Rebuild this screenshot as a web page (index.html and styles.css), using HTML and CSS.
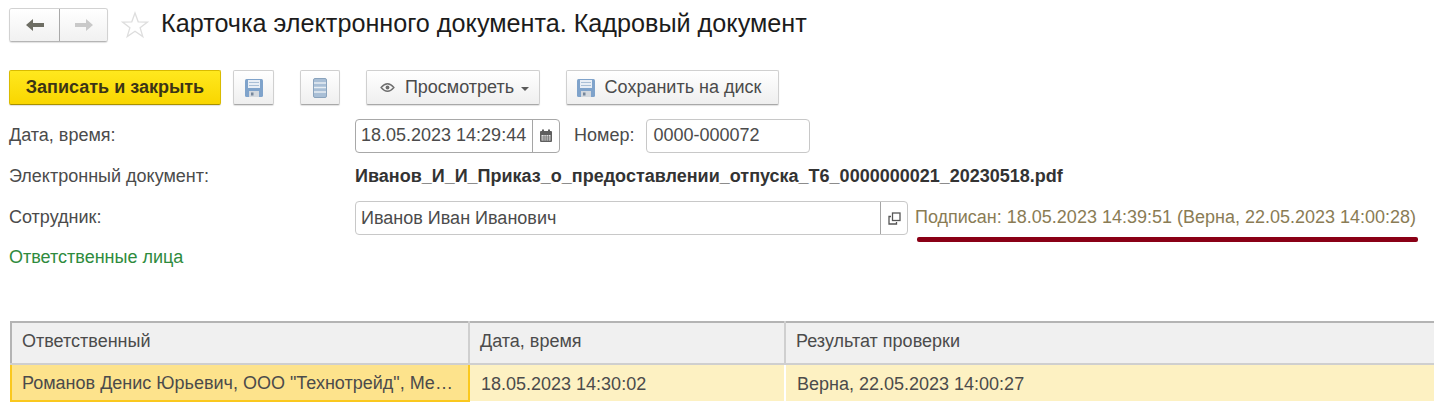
FILE: index.html
```html
<!DOCTYPE html>
<html lang="ru">

<head>
    <meta charset="UTF-8">
    <title>Карточка электронного документа. Кадровый документ</title>
    <link rel="stylesheet" href="styles.css">
</head>

<body>

    <div class="page">
        <!-- Title bar -->
        <div class="title-bar">
            <div class="nav-group">
                <button class="nav-btn" type="button">
                    <svg width="20" height="14" viewBox="0 0 20 14"><path d="M1 7 L8 1 V5 H19 V9 H8 V13 Z" fill="#6e6e64"/></svg>
                </button>
                <button class="nav-btn" type="button">
                    <svg width="20" height="14" viewBox="0 0 20 14"><path d="M19 7 L12 1 V5 H1 V9 H12 V13 Z" fill="#c9c9c9"/></svg>
                </button>
            </div>
            <svg class="star" width="28" height="28" viewBox="0 0 28 28"><path d="M14 2 L17.2 10.8 L26.5 11 L19.1 16.7 L21.8 25.6 L14 20.3 L6.2 25.6 L8.9 16.7 L1.5 11 L10.8 10.8 Z" fill="none" stroke="#dedede" stroke-width="1.3"/></svg>
            <h1>Карточка электронного документа. Кадровый документ</h1>
        </div>

        <!-- Command bar -->
        <div class="toolbar">
            <button class="btn btn-primary" type="button">Записать и закрыть</button>
            <button class="btn btn-icon btn-save" type="button">
                <svg width="20" height="20" viewBox="0 0 20 20"><path d="M1 2.5 Q1 1 2.5 1 H17.5 Q19 1 19 2.5 V17.5 Q19 19 17.5 19 H2.5 Q1 19 1 17.5 Z" fill="#7fa3cb"/><rect x="4" y="2" width="12" height="8" fill="#e8eef5"/><rect x="5" y="4" width="10" height="1" fill="#a9bfd6"/><rect x="5" y="7" width="10" height="1" fill="#a9bfd6"/><rect x="5" y="13" width="10" height="6" fill="#d3d8de"/><rect x="7" y="14.5" width="2.5" height="3" fill="#75869b"/></svg>
            </button>
            <button class="btn btn-icon btn-list" type="button">
                <svg width="14" height="20" viewBox="0 0 14 20"><rect x="0.5" y="0.5" width="13" height="19" rx="1.5" fill="#a9bfd6" stroke="#8aa3bd"/><path d="M1 5 H13 M1 9.5 H13 M1 14 H13" stroke="#e8eef4" stroke-width="1.4"/></svg>
            </button>
            <button class="btn btn-view" type="button">
                <svg width="15" height="11" viewBox="0 0 14 10"><path d="M1 5 Q7 -2 13 5 Q7 12 1 5 Z" fill="none" stroke="#6f6f6f" stroke-width="1.2"/><circle cx="7" cy="5" r="1.8" fill="#6f6f6f"/></svg>
                <span>Просмотреть</span>
                <i class="caret"></i>
            </button>
            <button class="btn btn-disk" type="button">
                <svg width="20" height="20" viewBox="0 0 20 20"><path d="M1 2.5 Q1 1 2.5 1 H17.5 Q19 1 19 2.5 V17.5 Q19 19 17.5 19 H2.5 Q1 19 1 17.5 Z" fill="#7fa3cb"/><rect x="4" y="2" width="12" height="8" fill="#e8eef5"/><rect x="5" y="4" width="10" height="1" fill="#a9bfd6"/><rect x="5" y="7" width="10" height="1" fill="#a9bfd6"/><rect x="5" y="13" width="10" height="6" fill="#d3d8de"/><rect x="7" y="14.5" width="2.5" height="3" fill="#75869b"/></svg>
                <span>Сохранить на диск</span>
            </button>
        </div>

        <!-- Document fields -->
        <div class="form-row row-date">
            <label class="field-label">Дата, время:</label>
            <div class="input input-date">
                <span class="input-text">18.05.2023 14:29:44</span>
                <span class="input-addon">
                    <svg width="14" height="14" viewBox="0 0 14 14"><rect x="1" y="2" width="12" height="11" rx="1" fill="#5f5f5f"/><rect x="3" y="0.5" width="2" height="3" fill="#5f5f5f"/><rect x="9" y="0.5" width="2" height="3" fill="#5f5f5f"/><path d="M2.5 6 H11.5 V11.5 H2.5 Z" fill="#e6e6e6"/><path d="M2.5 8 H11.5 M2.5 10 H11.5 M5 6 V12 M7.2 6 V12 M9.4 6 V12" stroke="#5f5f5f" stroke-width="0.7"/></svg>
                </span>
            </div>
            <span class="number-label">Номер:</span>
            <div class="input input-number"><span class="input-text">0000-000072</span></div>
        </div>

        <div class="form-row row-file">
            <label class="field-label">Электронный документ:</label>
            <b class="file-name">Иванов_И_И_Приказ_о_предоставлении_отпуска_Т6_0000000021_20230518.pdf</b>
        </div>

        <div class="form-row row-employee">
            <label class="field-label">Сотрудник:</label>
            <div class="input input-employee">
                <span class="input-text">Иванов Иван Иванович</span>
                <span class="input-addon">
                    <svg width="13" height="13" viewBox="0 0 13 13"><rect x="4.5" y="1" width="7.5" height="7.5" fill="none" stroke="#555" stroke-width="1.3"/><path d="M3 4.5 H1 V12 H8.5 V10" fill="none" stroke="#555" stroke-width="1.3"/></svg>
                </span>
            </div>
            <div class="status">Подписан: 18.05.2023 14:39:51 (Верна, 22.05.2023 14:00:28)</div>
        </div>

        <a class="group-link" href="#">Ответственные лица</a>

        <!-- Signatures table -->
        <table class="grid">
            <thead>
                <tr>
                    <th class="col-person">Ответственный</th>
                    <th class="col-date">Дата, время</th>
                    <th>Результат проверки</th>
                </tr>
            </thead>
            <tbody>
                <tr>
                    <td class="cell-current">Романов Денис Юрьевич, ООО "Технотрейд", Ме…</td>
                    <td>18.05.2023 14:30:02</td>
                    <td>Верна, 22.05.2023 14:00:27</td>
                </tr>
            </tbody>
        </table>
    </div>

</body>

</html>
```

FILE: styles.css
```css
html,
body {
    margin: 0;
    padding: 0;
    height: 404px;
    overflow: hidden;
    background-color: #fff;
}

body {
    font-family: "Liberation Sans", Arial, sans-serif;
    font-size: 18px;
    color: #4b4b4b;
}

.page {
    padding: 8px 0 0 9px;
}

.title-bar {
    display: flex;
    align-items: center;
    height: 34px;
}

.nav-group {
    display: flex;
    width: 99px;
    height: 34px;
    box-sizing: border-box;
    border: 1px solid #d2d2d2;
    border-bottom-color: #b5b5b5;
    border-radius: 3px;
    box-shadow: 0 1px 1px rgba(0, 0, 0, 0.12);
    overflow: hidden;
}

.nav-btn {
    display: flex;
    align-items: center;
    justify-content: center;
    flex: 1;
    padding: 0;
    border: none;
    background: linear-gradient(#fff, #f1f1f1);
}

.nav-btn:first-child {
    flex: none;
    width: 50px;
    border-right: 1px solid #a9a9a9;
}

.star {
    margin-left: 13px;
}

h1 {
    margin: -4px 0 0 12px;
    font-size: 25.2px;
    font-weight: normal;
    color: #1c1c1c;
}

.toolbar {
    display: flex;
    margin-top: 28px;
    height: 35px;
}

.btn {
    display: flex;
    align-items: center;
    justify-content: center;
    box-sizing: border-box;
    height: 35px;
    padding: 0;
    font: inherit;
    color: #4b4b4b;
    background: linear-gradient(#fff, #efefef);
    border: 1px solid #d0d0d0;
    border-bottom-color: #a8a8a8;
    border-radius: 2px;
    box-shadow: 0 1px 1px rgba(0, 0, 0, 0.12);
}

.btn-primary {
    width: 212px;
    font-weight: bold;
    color: #3b3416;
    background: linear-gradient(#ffe81e, #f9d600);
    border-color: #d9bb00;
    border-bottom-color: #a89000;
}

.btn-icon {
    width: 41px;
}

.btn-save {
    margin-left: 12px;
}

.btn-list {
    margin-left: 26px;
    width: 40px;
}

.btn-view {
    margin-left: 26px;
    width: 174px;
    padding-left: 3px;
}

.btn-view span {
    margin-left: 10px;
}

.caret {
    margin: 2px 0 0 7px;
    border: 4px solid transparent;
    border-top-color: #5a5a5a;
    border-bottom: none;
}

.btn-disk {
    margin-left: 26px;
    width: 213px;
    padding-right: 8px;
}

.btn-disk span {
    margin-left: 9px;
}

.form-row {
    display: flex;
    align-items: center;
}

.field-label {
    width: 346px;
    flex: none;
    padding-bottom: 2px;
}

.row-date {
    margin-top: 14px;
    height: 34px;
}

.row-file {
    margin-top: 7px;
    height: 34px;
}

.row-employee {
    margin-top: 7px;
    height: 34px;
}

.input {
    display: flex;
    align-items: stretch;
    box-sizing: border-box;
    height: 34px;
    border: 1px solid #c8c8c8;
    border-radius: 4px;
    background-color: #fff;
}

.input-text {
    flex: 1;
    padding-left: 5px;
    line-height: 31px;
    white-space: nowrap;
}

.input-addon {
    display: flex;
    align-items: center;
    justify-content: center;
    width: 26px;
    border-left: 1px solid #a5a5a5;
}

.input-date {
    width: 205px;
    border-color: #a8a8a8;
}

.number-label {
    margin-left: 14px;
    padding-bottom: 2px;
}

.input-number {
    margin-left: 12px;
    width: 164px;
}

.input-number .input-text {
    padding-left: 6px;
}

.file-name {
    padding-bottom: 2px;
    color: #333;
}

.input-employee {
    width: 553px;
}

.input-employee .input-text {
    line-height: 33px;
}

.status {
    position: relative;
    margin-left: 7px;
    padding-bottom: 2px;
    color: #8a7c55;
    white-space: nowrap;
}

/* hand-drawn underline on the screenshot */
.status::after {
    content: "";
    position: absolute;
    left: 2px;
    right: -2px;
    top: 30px;
    height: 5px;
    border-radius: 2px;
    background-color: #8a0016;
}

.group-link {
    display: block;
    margin-top: 12px;
    color: #2e8b3d;
    text-decoration: none;
}

.grid {
    width: 1425px;
    margin: 53px 0 0 1px;
    table-layout: fixed;
    border-collapse: collapse;
    border-top: 2px solid #b4b4b4;
    border-left: 2px solid #b4b4b4;
}

.grid th {
    height: 42px;
    box-sizing: border-box;
    padding: 0 0 4px 10px;
    font-weight: normal;
    text-align: left;
    background-color: #f0f0f0;
    border-right: 2px solid #cfcfcf;
    border-bottom: 2px solid #cfcfcf;
}

.grid th:last-child {
    padding-left: 10px;
}

.col-person {
    width: 458px;
}

.col-date {
    width: 316px;
}

.grid td {
    height: 37px;
    box-sizing: border-box;
    padding: 2px 0 0 11px;
    background-color: #fdf1c2;
    border-right: 2px solid #fff;
    white-space: nowrap;
}

.grid td:last-child {
    padding-left: 11px;
}

.grid td:last-child,
.grid th:last-child {
    border-right: none;
}

.grid td.cell-current {
    padding: 2px 0 0 10px;
    background-color: #fde38c;
    border: 2px solid #fac81e;
}
```
